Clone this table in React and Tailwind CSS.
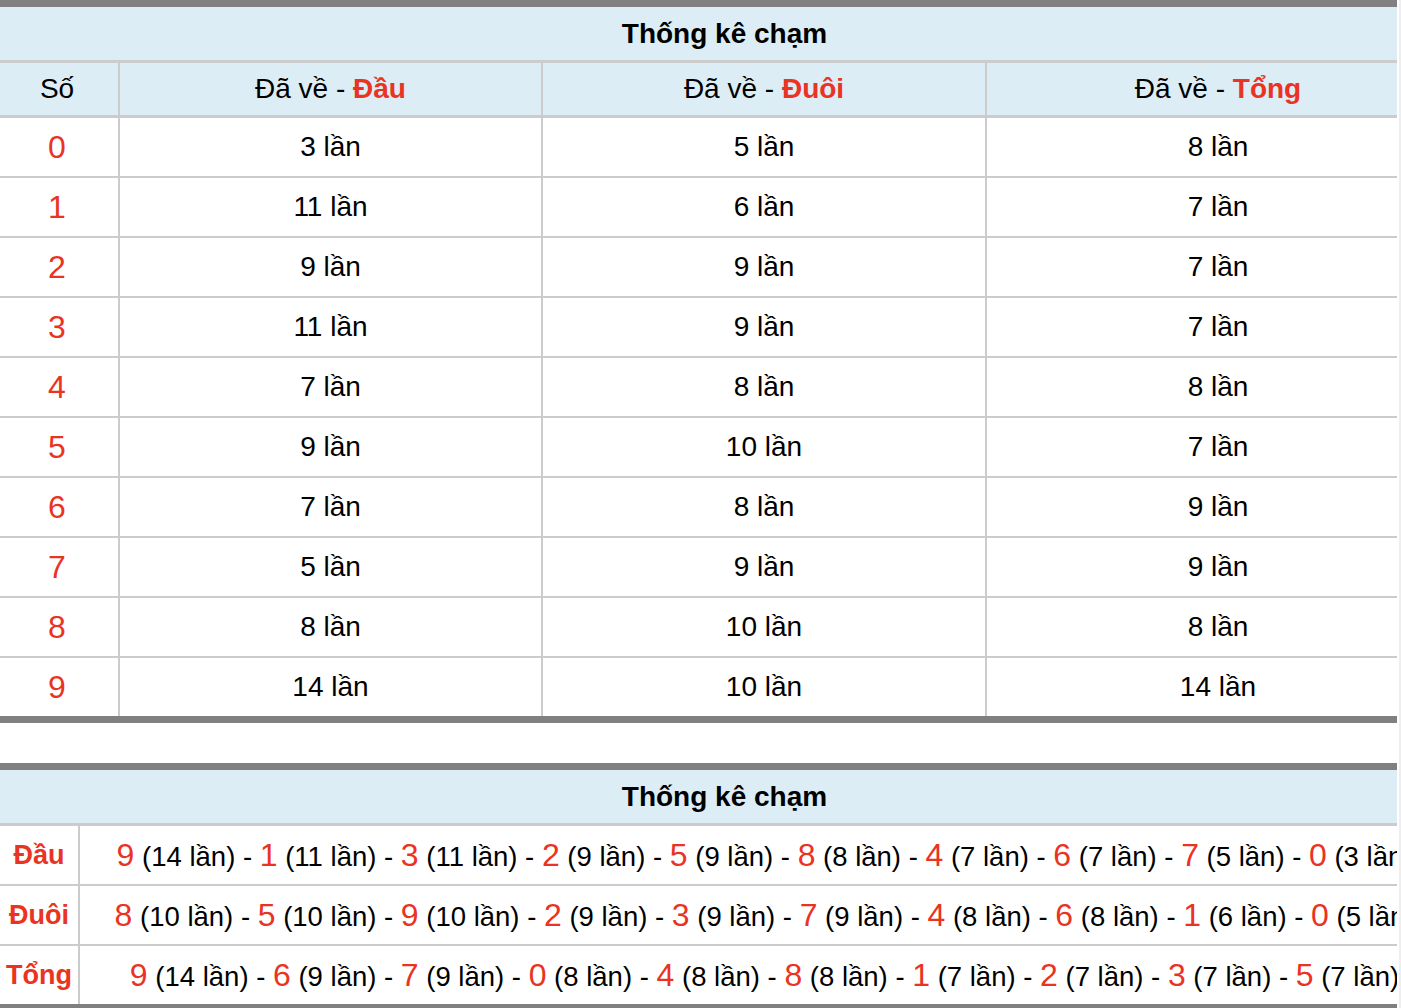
import React from 'react';

const dau = [3, 11, 9, 11, 7, 9, 7, 5, 8, 14];
const duoi = [5, 6, 9, 9, 8, 10, 8, 9, 10, 10];
const tong = [8, 7, 7, 7, 8, 7, 9, 9, 8, 14];

const summary = [
  { label: 'Đầu', items: [[9, 14], [1, 11], [3, 11], [2, 9], [5, 9], [8, 8], [4, 7], [6, 7], [7, 5], [0, 3]] },
  { label: 'Đuôi', items: [[8, 10], [5, 10], [9, 10], [2, 9], [3, 9], [7, 9], [4, 8], [6, 8], [1, 6], [0, 5]] },
  { label: 'Tổng', items: [[9, 14], [6, 9], [7, 9], [0, 8], [4, 8], [8, 8], [1, 7], [2, 7], [3, 7], [5, 7]] },
];

const Title = () => (
  <div className="h-[56px] bg-[#dcedf5] border-b-[3px] border-[#cccccc] flex items-center justify-center text-[28px] font-bold text-black">
    Thống kê chạm
  </div>
);

const App = () => {
  return (
    <div className="flex w-[1401px] min-h-[1008px] bg-white text-black" style={{ fontFamily: '"Liberation Sans", Arial, sans-serif' }}>
      <div className="w-[1397px] overflow-hidden">
        {/* Bảng 1 */}
        <div className="w-[1449px] border-t-[7px] border-b-[7px] border-[#808080]">
          <Title />
          <div className="flex h-[55px] bg-[#dcedf5] border-b-[3px] border-[#cccccc] text-[28px]">
            <div className="w-[120px] border-r-2 border-[#cccccc] flex items-center justify-center pr-[4px]">Số</div>
            <div className="w-[423px] border-r-2 border-[#cccccc] flex items-center justify-center">
              <span>Đã về - <span className="font-bold text-[#ea3323]">Đầu</span></span>
            </div>
            <div className="w-[444px] border-r-2 border-[#cccccc] flex items-center justify-center">
              <span>Đã về - <span className="font-bold text-[#ea3323]">Đuôi</span></span>
            </div>
            <div className="flex-1 flex items-center justify-center">
              <span>Đã về - <span className="font-bold text-[#ea3323]">Tổng</span></span>
            </div>
          </div>
          {dau.map((d, i) => (
            <div key={i} className={`flex text-[28px] ${i < 9 ? 'h-[60px] border-b-2 border-[#cccccc]' : 'h-[58px]'}`}>
              <div className="w-[120px] border-r-2 border-[#cccccc] flex items-center justify-center pr-[4px] text-[32px] text-[#ea3323]">{i}</div>
              <div className="w-[423px] border-r-2 border-[#cccccc] flex items-center justify-center">{d} lần</div>
              <div className="w-[444px] border-r-2 border-[#cccccc] flex items-center justify-center">{duoi[i]} lần</div>
              <div className="flex-1 flex items-center justify-center">{tong[i]} lần</div>
            </div>
          ))}
        </div>

        <div className="h-[40px]" />

        {/* Bảng 2 */}
        <div className="w-[1449px] border-t-[7px] border-b-[7px] border-[#808080]">
          <Title />
          {summary.map((row, r) => (
            <div key={row.label} className={`flex ${r < 2 ? 'h-[60px] border-b-2 border-[#cccccc]' : 'h-[58px]'}`}>
              <div className="w-[80px] shrink-0 border-r-2 border-[#cccccc] flex items-center justify-center text-[27px] font-bold text-[#ea3323]">
                {row.label}
              </div>
              <div className="flex-1 flex items-center justify-center whitespace-nowrap text-[27.5px]">
                <span>
                  {row.items.map(([n, c], k) => (
                    <React.Fragment key={k}>
                      <span className="text-[32px] text-[#ea3323]">{n}</span>
                      {` (${c} lần)`}
                      {k < row.items.length - 1 ? ' - ' : ''}
                    </React.Fragment>
                  ))}
                </span>
              </div>
            </div>
          ))}
        </div>
      </div>
      <div className="w-[2px]" />
      <div className="w-[2px] bg-[#eeeeee]" />
    </div>
  );
};

export default App;
